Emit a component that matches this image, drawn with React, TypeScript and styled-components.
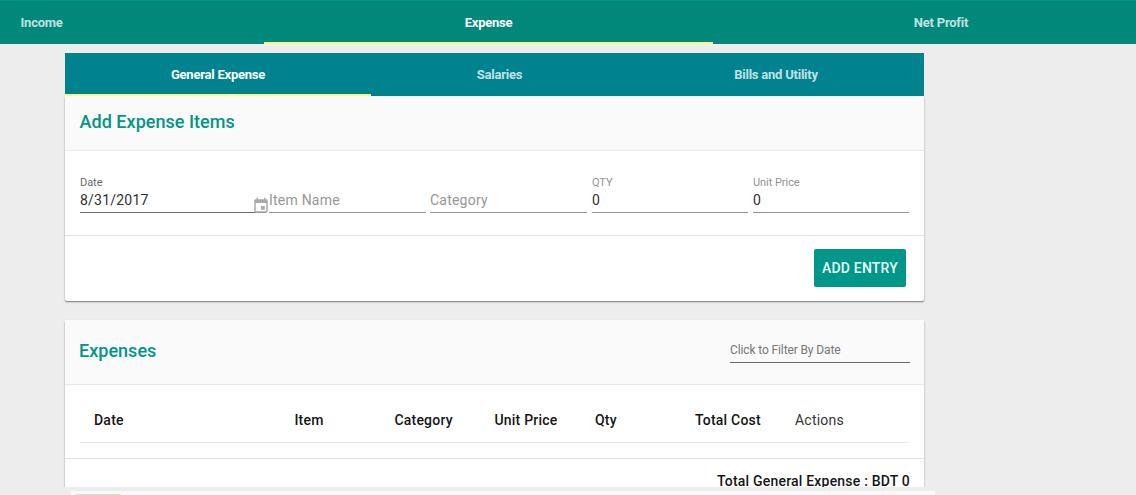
import React from 'react';
import styled, { createGlobalStyle } from 'styled-components';

const GlobalStyle = createGlobalStyle`
  * { box-sizing: border-box; }
  body { margin: 0; background: #ededed; font-family: Roboto, "Liberation Sans", sans-serif; color: #212121; }
`;

const Page = styled.div`
  height: 495px;
  overflow: hidden;
  display: flex;
  flex-direction: column;
`;

const TopTabs = styled.nav`
  display: grid;
  grid-template-columns: 264px 449px 456px;
  flex: none;
  height: 44px;
  background: #00897b;
  border-top: 1px solid #009688;
`;

const SubTabs = styled.nav`
  display: grid;
  grid-template-columns: 306px 257px 296px;
  height: 43px;
  background: #00838f;
`;

const Tab = styled.a<{ $active?: boolean; $start?: boolean }>`
  display: flex;
  align-items: center;
  justify-content: ${(p) => (p.$start ? 'flex-start' : 'center')};
  padding-left: ${(p) => (p.$start ? '20.5px' : '0')};
  font-size: 13px;
  font-weight: 700;
  letter-spacing: -0.23px;
  white-space: nowrap;
  color: ${(p) => (p.$active ? '#fff' : 'rgba(255, 255, 255, 0.77)')};
  box-shadow: ${(p) => (p.$active ? 'inset 0 -2px #f4ff81' : 'none')};
`;

const Content = styled.main`
  width: 859px;
  margin: 9px 0 0 65px;
  height: 434px;
  flex: none;
`;

const Clip = styled.div`
  height: 434px;
  margin: 0 -6px;
  padding: 0 6px;
  overflow: hidden;
`;

const Card = styled.section<{ $gap?: number }>`
  margin-top: ${(p) => p.$gap || 0}px;
  background: #fff;
  border-radius: ${(p) => (p.$gap ? '2px' : '0 0 2px 2px')};
  box-shadow: 0 1px 2px rgba(0, 0, 0, 0.34), 0 1px 1px rgba(0, 0, 0, 0.2);
`;

const CardHeader = styled.header<{ $height: number }>`
  display: flex;
  justify-content: space-between;
  height: ${(p) => p.$height}px;
  padding: 0 14px;
  background: #fafafa;
  border-bottom: 1px solid #e8e8e8;
`;

const Title = styled.h2<{ $top: number; $indent?: number }>`
  margin: ${(p) => p.$top}px 0 0 ${(p) => p.$indent || 0}px;
  font-size: 18px;
  line-height: 24px;
  font-weight: 500;
  letter-spacing: 0.02px;
  color: #009688;
`;

const Form = styled.div`
  display: grid;
  grid-template-columns: 189px 161px 162px 161px 156px;
  height: 84px;
  padding: 24px 0 0 15px;
  justify-content: start;
`;

const Field = styled.label<{ $strong?: boolean; $width: number }>`
  display: flex;
  flex-direction: column;
  width: ${(p) => p.$width}px;
  height: 38px;
  position: relative;
  border-bottom: 1px solid ${(p) => (p.$strong ? '#6d6d6d' : '#959595')};
`;

const FieldLabel = styled.span<{ $strong?: boolean }>`
  height: 15px;
  font-size: 11px;
  line-height: 16px;
  letter-spacing: -0.05px;
  color: ${(p) => (p.$strong ? '#686868' : '#929292')};
`;

const FieldValue = styled.span<{ $placeholder?: boolean }>`
  font-size: 14px;
  line-height: 20px;
  letter-spacing: 0.22px;
  color: ${(p) => (p.$placeholder ? '#979797' : '#303030')};
`;

const CalendarIcon = styled.svg`
  position: absolute;
  right: -4px;
  bottom: -3px;
  width: 18px;
  height: 18px;
  fill: #aaa;
`;

const Actions = styled.footer`
  display: flex;
  justify-content: flex-end;
  height: 66px;
  padding: 13px 18px 0 0;
  border-top: 1px solid #e2e2e2;
`;

const Button = styled.button`
  width: 92px;
  height: 38px;
  padding: 0;
  border: 0;
  border-radius: 2px;
  background: #009688;
  color: #e6fffb;
  font: 500 14px Roboto, sans-serif;
  letter-spacing: 0.2px;
  white-space: nowrap;
`;

const Filter = styled.div`
  width: 180px;
  height: 23px;
  margin-top: 20px;
  border-bottom: 1px solid #6d6d6d;
  font-size: 12px;
  line-height: 20px;
  letter-spacing: -0.12px;
  color: #777;
`;

const TableHead = styled.div`
  display: grid;
  grid-template-columns: 200.4px 100px 100px 100.6px 100px 100px 1fr;
  align-items: center;
  height: 58px;
  margin: 0 15px 15px;
  padding: 12px 0 0 14px;
  border-bottom: 1px solid #e8e8e8;
`;

const HeadCell = styled.span<{ $light?: boolean }>`
  font-size: 14px;
  line-height: 20px;
  font-weight: ${(p) => (p.$light ? 400 : 500)};
  letter-spacing: 0.22px;
  color: ${(p) => (p.$light ? '#333' : '#161616')};
`;

const Total = styled.div`
  padding: 12px 14px;
  border-top: 1px solid #e2e2e2;
  text-align: right;
  font-size: 14px;
  line-height: 20px;
  font-weight: 500;
  letter-spacing: 0.2px;
  color: #161616;
`;

const Toast = styled.aside`
  width: 864px;
  height: 10px;
  flex: none;
  margin: 4px 0 0 71px;
  padding: 3px 0 0 4px;
  background: #fafafa;
`;

const ToastChip = styled.div`
  width: 47px;
  height: 10px;
  border-radius: 2px;
  background: #c8e6c9;
`;

const columns = ['Date', 'Item', 'Category', 'Unit Price', 'Qty', 'Total Cost', 'Actions'];

export default function App() {
  return (
    <Page>
      <GlobalStyle />
      <TopTabs>
        <Tab $start>Income</Tab>
        <Tab $active>Expense</Tab>
        <Tab>Net Profit</Tab>
      </TopTabs>
      <Content>
        <Clip>
          <SubTabs>
            <Tab $active>General Expense</Tab>
            <Tab>Salaries</Tab>
            <Tab>Bills and Utility</Tab>
          </SubTabs>
          <Card>
            <CardHeader $height={55}>
              <Title $top={14} $indent={0.6}>Add Expense Items</Title>
            </CardHeader>
            <Form>
              <Field $strong $width={186}>
                <FieldLabel $strong>Date</FieldLabel>
                <FieldValue>8/31/2017</FieldValue>
                <CalendarIcon viewBox="0 0 24 24">
                  <path d="M17 12h-5v5h5v-5zM16 1v2H8V1H6v2H5c-1.1 0-2 .9-2 2v14c0 1.1.9 2 2 2h14c1.1 0 2-.9 2-2V5c0-1.1-.9-2-2-2h-1V1h-2zm3 18H5V8h14v11z" />
                </CalendarIcon>
              </Field>
              <Field $width={157}>
                <FieldLabel />
                <FieldValue $placeholder>Item Name</FieldValue>
              </Field>
              <Field $width={157}>
                <FieldLabel />
                <FieldValue $placeholder>Category</FieldValue>
              </Field>
              <Field $width={156}>
                <FieldLabel>QTY</FieldLabel>
                <FieldValue>0</FieldValue>
              </Field>
              <Field $width={156}>
                <FieldLabel>Unit Price</FieldLabel>
                <FieldValue>0</FieldValue>
              </Field>
            </Form>
            <Actions>
              <Button>ADD ENTRY</Button>
            </Actions>
          </Card>
          <Card $gap={19}>
            <CardHeader $height={65}>
              <Title $top={19}>Expenses</Title>
              <Filter>Click to Filter By Date</Filter>
            </CardHeader>
            <TableHead>
              {columns.map((name) => (
                <HeadCell key={name} $light={name === 'Actions'}>{name}</HeadCell>
              ))}
            </TableHead>
            <Total>Total General Expense : BDT 0</Total>
          </Card>
        </Clip>
      </Content>
      <Toast>
        <ToastChip />
      </Toast>
    </Page>
  );
}
